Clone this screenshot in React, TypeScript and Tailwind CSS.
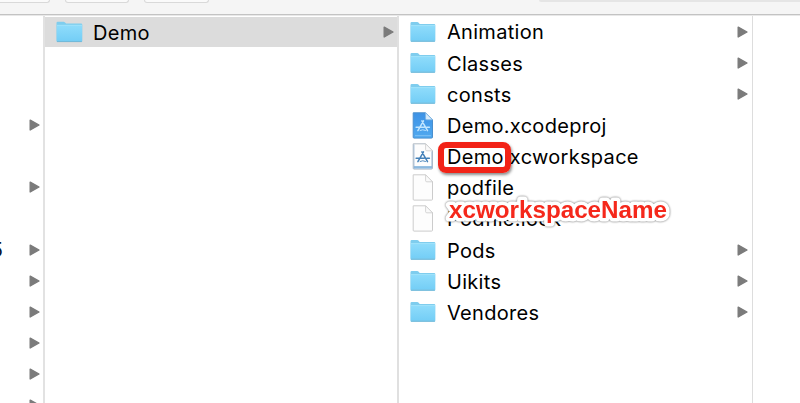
type Kind = "folder" | "project" | "workspace" | "file";

function Arrow() {
  return (
    <svg viewBox="0 0 11 12" className="h-[12px] w-[11px] shrink-0">
      <path d="M1.2 1.1 10 6 1.2 10.9Z" fill="#7b7b7b" stroke="#7b7b7b" strokeWidth="1.4" strokeLinejoin="round" />
    </svg>
  );
}

function FolderIcon() {
  return (
    <svg viewBox="0 0 27 22" className="h-[22px] w-[27px]">
      <defs>
        <linearGradient id="folder" x1="0" y1="0" x2="0" y2="1">
          <stop offset="0" stopColor="#8fdcfb" />
          <stop offset="1" stopColor="#74cef6" />
        </linearGradient>
      </defs>
      <path d="M.5 20V2Q.5.7 1.8.7H7.5Q8.4.7 9 1.4L10.1 2.6H25Q26.3 2.6 26.3 4V20Q26.3 21 25.3 21H1.5Q.5 21 .5 20Z" fill="#7fcdee" />
      <path d="M.8 4.2H26V19.8H.8Z" fill="url(#folder)" />
      <path d="M1 4.3H26" stroke="#a6e6fc" strokeWidth=".8" />
      <path d="M1 20.6H25.8" stroke="#6fb5d5" strokeWidth=".9" />
    </svg>
  );
}

function DocIcon({ kind }: { kind: Kind }) {
  const project = kind === "project";
  const plain = kind === "file";
  const mark = project ? "#c2e6ff" : "#4380b8";
  return (
    <svg viewBox="0 0 22 27" className="h-[27px] w-[22px]">
      <defs>
        <linearGradient id="blueprint" x1="0" y1="0" x2="0" y2="1">
          <stop offset="0" stopColor="#3d92e6" />
          <stop offset="1" stopColor="#50a9ef" />
        </linearGradient>
      </defs>
      <path
        d="M1.2.8H13.6L20.5 7.8V25.2Q20.5 26.1 19.6 26.1H2Q1.2 26.1 1.2 25.2Z"
        fill={project ? "url(#blueprint)" : "#fdfdfd"}
        stroke={project ? "#4a8fce" : plain ? "#cccccc" : "#b3bbc4"}
        strokeWidth="1"
      />
      <path d="M13.6.8V6.6Q13.6 7.8 14.8 7.8H20.5Z" fill={project ? "#d9ecfb" : "#fafafa"} stroke={project ? "#82b8e5" : "#cccccc"} strokeWidth=".8" />
      {kind === "workspace" && <path d="M1.8 23.1H19.9V25.6H1.8Z" fill="#8cb9df" />}
      {kind === "workspace" && <path d="M2 1.5V25.5M19.8 8.5V25.5" stroke="#8fafd0" strokeWidth=".7" />}
      {project && <path d="M3 23.7H19" stroke="#84c5f5" strokeWidth=".9" />}
      {!plain && (
        <g fill="none" stroke={mark} strokeWidth="1.5" strokeLinecap="round">
          <path d="M11.5 8.8 5.9 18.6M9.9 8.8 15.5 18.6M4.1 15.2H12.2M14.8 15.2H17.4" />
          <path d="M8.1 18.4Q10.8 17 13.5 18.4" strokeWidth=".9" />
        </g>
      )}
    </svg>
  );
}

const items: { name: string; kind: Kind }[] = [
  { name: "Animation", kind: "folder" },
  { name: "Classes", kind: "folder" },
  { name: "consts", kind: "folder" },
  { name: "Demo.xcodeproj", kind: "project" },
  { name: "Demo.xcworkspace", kind: "workspace" },
  { name: "podfile", kind: "file" },
  { name: "Podfile.lock", kind: "file" },
  { name: "Pods", kind: "folder" },
  { name: "Uikits", kind: "folder" },
  { name: "Vendores", kind: "folder" },
];

const parentRows = [false, false, false, true, false, true, false, true, true, true, true, true, true];

export default function App() {
  return (
    <div className="relative flex h-[403px] w-[800px] flex-col overflow-hidden bg-white font-['Inter','Liberation_Sans',sans-serif] text-[20px] text-black">
      <header className="flex h-[15px] shrink-0 items-start border-b border-[#c3c3c3] bg-[#f5f5f5]">
        <div className="h-[3px] w-[50px] rounded-br-[4px] border-r border-b border-[#d9d9d9] bg-[#fafafa]" />
        <div className="ml-[15px] h-[3px] w-[64px] rounded-b-[4px] border-x border-b border-[#d9d9d9] bg-[#fafafa]" />
        <div className="ml-[15px] h-[3px] w-[65px] rounded-b-[4px] border-x border-b border-[#d9d9d9] bg-[#fafafa]" />
        <div className="ml-[330px] h-[2px] flex-1 rounded-bl-[3px] bg-[#e5e5e5]" />
      </header>
      <main className="flex min-h-0 flex-1 border-t border-[#e8e8e8]">
        <section className="w-[45px] shrink-0 overflow-hidden border-r-2 border-[#e2e2e2]">
          {parentRows.map((arrow, i) => (
            <div key={i} className="flex h-[31.15px] items-center justify-between pr-[3px] text-[#08132c]">
              <span className="flex w-[3px] justify-end pt-px">{i === 7 && "5"}</span>
              {arrow && <Arrow />}
            </div>
          ))}
        </section>
        <section className="w-[354px] shrink-0 border-r-2 border-[#e0e0e0] pt-[1px]">
          <div className="flex h-[30px] items-center bg-[#dcdcdc] pr-[3px] pl-[11px]">
            <FolderIcon />
            <span className="ml-[10px] flex-1 pt-px tracking-[0.3px]">Demo</span>
            <Arrow />
          </div>
        </section>
        <section className="w-[354px] shrink-0 overflow-hidden border-r-[1.5px] border-[#dddddd]">
          {items.map(({ name, kind }) => (
            <div key={name} className="flex h-[31.18px] items-center pr-[4px] pl-[11px]">
              <span className="flex w-[26px] shrink-0 justify-center">{kind === "folder" ? <FolderIcon /> : <DocIcon kind={kind} />}</span>
              <span className="ml-[11px] flex-1 pt-[1.5px] tracking-[0.3px] whitespace-nowrap">{name}</span>
              {kind === "folder" && <Arrow />}
            </div>
          ))}
        </section>
      </main>
      <div className="absolute top-[142px] left-[438px] h-[31px] w-[73px] rounded-[8px] border-[6px] border-[#f22317] shadow-[1px_2px_3px_rgba(0,0,0,0.45)]" />
      <svg className="absolute top-[190px] left-[435px] h-[45px] w-[250px] drop-shadow-[0_0_1px_rgba(0,0,0,0.6)]">
        <text x="14" y="28" textLength="218" lengthAdjust="spacingAndGlyphs" fontSize="24" fontWeight="bold" fontFamily="Liberation Sans, sans-serif" fill="#f5281b" stroke="white" strokeWidth="7" strokeLinejoin="round" paintOrder="stroke">
          xcworkspaceName
        </text>
      </svg>
    </div>
  );
}
